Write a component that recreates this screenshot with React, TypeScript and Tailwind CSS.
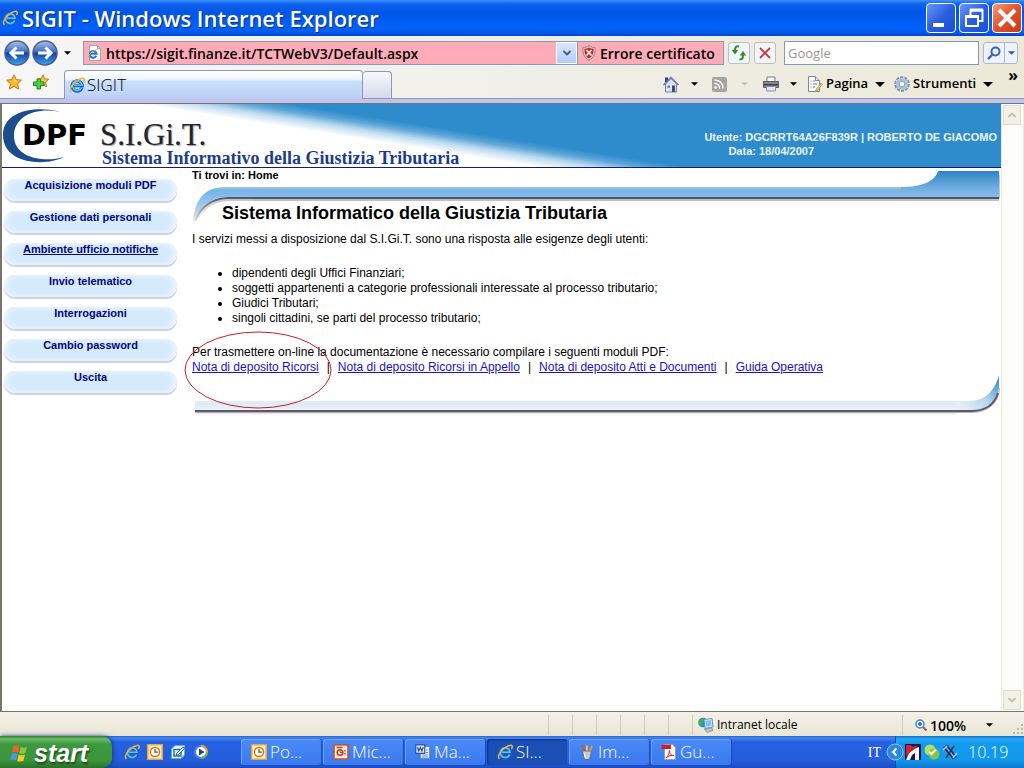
import type { ReactNode } from "react";
import { ChevronDown, ChevronUp, Rss } from "lucide-react";

const menuItems = [
  { label: "Acquisizione moduli PDF" },
  { label: "Gestione dati personali" },
  { label: "Ambiente ufficio notifiche", active: true },
  { label: "Invio telematico" },
  { label: "Interrogazioni" },
  { label: "Cambio password" },
  { label: "Uscita" },
];

const audiences = [
  "dipendenti degli Uffici Finanziari;",
  "soggetti appartenenti a categorie professionali interessate al processo tributario;",
  "Giudici Tributari;",
  "singoli cittadini, se parti del processo tributario;",
];

const forms = [
  "Nota di deposito Ricorsi",
  "Nota di deposito Ricorsi in Appello",
  "Nota di deposito Atti e Documenti",
  "Guida Operativa",
];

/* ---------- icons ---------- */

function IeIcon({ className = "size-4" }: { className?: string }) {
  return (
    <svg viewBox="0 0 16 16" className={className} fill="none" aria-hidden="true">
      <path d="M13 10.5A5 5 0 1 1 13.2 8.6H5" stroke="#1c62bd" strokeWidth="3.4" />
      <path d="M12.6 10.6A4.8 4.8 0 1 1 13 8.2H5" stroke="#5fc0f2" strokeWidth="1.600" />
      <path
        d="M2.6 14.8C-.2 13.6 2.6 8 6.6 4.8 10 2 14 .4 15 1.8c.6.9.2 2-.6 3.2"
        stroke="#e9b53a"
        strokeWidth="1.500"
      />
    </svg>
  );
}

function PageIeIcon() {
  return (
    <svg viewBox="0 0 16 16" className="size-4" fill="none" aria-hidden="true">
      <path d="M2.5.5h8l3 3v12h-11z" fill="#fff" stroke="#9fa8b5" />
      <path d="M10.500.5v3h3" stroke="#9fa8b5" />
      <path d="M9.300 10.800A3.400 3.400 0 1 1 9.600 8.800H3.500" stroke="#2277d0" strokeWidth="2" />
      <path d="M1.500 13C.500 11 5 5.500 10.500 4.500" stroke="#e9b53a" />
    </svg>
  );
}

function ArrowBall({ flip = false }: { flip?: boolean }) {
  const id = flip ? "ballNext" : "ballBack";
  return (
    <svg viewBox="0 0 26 26" className="size-[26px]" aria-hidden="true">
      <defs>
        <linearGradient id={id} x1="0" y1="0" x2="0" y2="1">
          <stop offset="0" stopColor="#a9c3ea" />
          <stop offset=".45" stopColor="#3f6fc0" />
          <stop offset=".5" stopColor="#12409c" />
          <stop offset="1" stopColor="#3fa6ee" />
        </linearGradient>
      </defs>
      <circle cx="13" cy="13" r="12" fill={`url(#${id})`} stroke="#4a5f8c" strokeWidth="1.500" />
      <path
        d={flip ? "M6 13h13M13.500 7.500l5.500 5.500-5.500 5.500" : "M20 13H7M12.500 7.500L7 13l5.500 5.500"}
        fill="none"
        stroke="#fff"
        strokeWidth="3"
      />
    </svg>
  );
}

function Caret({ className = "text-black" }: { className?: string }) {
  return (
    <svg viewBox="0 0 10 5" className={`h-[4px] w-[7px] ${className}`} aria-hidden="true">
      <path d="M0 0h10L5 5z" fill="currentColor" />
    </svg>
  );
}

function WideCaret() {
  return (
    <svg viewBox="0 0 10 5" className="h-[5px] w-[10px]" aria-hidden="true">
      <path d="M0 0h10L5 5z" fill="#000" />
    </svg>
  );
}

function StarIcon() {
  return (
    <svg viewBox="0 0 16 16" className="size-4" aria-hidden="true">
      <path
        d="M8 .8l2.200 4.800 5.200.6-3.800 3.600 1 5.200L8 12.400 3.400 15l1-5.200L.6 6.200l5.200-.6z"
        fill="#fbb725"
        stroke="#c27c18"
      />
      <path d="M8 3l1.300 3.500 3 .4L8 8z" fill="#ffe28a" />
    </svg>
  );
}

function AddStarIcon() {
  return (
    <svg viewBox="0 0 16 16" className="size-4" aria-hidden="true">
      <path
        d="M10 .8l1.700 4 4 .4-3 3 .8 4.600L10 10.600l-4 2 1-4.400-3-3 4-.4z"
        fill="#fbc246"
        stroke="#c27c18"
      />
      <path d="M4 5h3.500v3H11v3.500H7.500V15H4v-3.500H.5V8H4z" fill="#4fd048" stroke="#1b8a1f" />
    </svg>
  );
}

function ShieldIcon() {
  return (
    <svg viewBox="0 0 14 16" className="h-4 w-[14px]" aria-hidden="true">
      <path d="M7 .7c2 1.500 4 1.800 6 1.600.6 6-1 10.500-6 13C2 12.800.4 8.300 1 2.300c2 .2 4-.1 6-1.600z" fill="#d9d4cf" stroke="#8d8583" />
      <path d="M7 2.500c1.500 1 3 1.300 4.500 1.200.2 4.600-1 7.800-4.500 9.800-3.500-2-4.700-5.200-4.500-9.800C4 3.800 5.500 3.500 7 2.500z" fill="#cf1f26" />
      <path d="M4.500 5l5 5.500M9.500 5l-5 5.500" stroke="#fff" strokeWidth="1.700" />
    </svg>
  );
}

function RefreshIcon() {
  return (
    <svg viewBox="0 0 16 16" className="size-4" fill="none" aria-hidden="true">
      <path d="M8 1.500C5.500.5 4 2 4 5.500" stroke="#2f8c2c" strokeWidth="2" />
      <path d="M.8 5h6.400L4 9.500z" fill="#2f8c2c" />
      <path d="M8.500 14c2.500 1 3.500-.5 3.500-4" stroke="#2f8c2c" strokeWidth="2" />
      <path d="M8.800 10.500h6.400L12 6z" fill="#2f8c2c" />
    </svg>
  );
}

function StopIcon() {
  return (
    <svg viewBox="0 0 12 12" className="size-3" aria-hidden="true">
      <path d="M1 1l10 10M11 1L1 11" stroke="#c8363c" strokeWidth="1.800" />
    </svg>
  );
}

function SearchIcon() {
  return (
    <svg viewBox="0 0 14 14" className="size-[14px]" fill="none" aria-hidden="true">
      <circle cx="8.500" cy="5.500" r="4" stroke="#3563c4" strokeWidth="2" />
      <path d="M5.500 8.500L1 13" stroke="#3563c4" strokeWidth="2.400" />
    </svg>
  );
}

function HomeIcon() {
  return (
    <svg viewBox="0 0 16 17" className="h-[17px] w-4" aria-hidden="true">
      <path d="M2 1.500h3V6H2z" fill="#3a3f9c" />
      <path d="M2.500 8v8h11V8L8 2.500z" fill="#dbe4f3" stroke="#7384a8" />
      <path d="M.5 9L8 1.500 15.500 9" fill="none" stroke="#6479a8" strokeWidth="1.500" />
      <path d="M9 9.500h3V16H9z" fill="#344f7c" />
      <path d="M4.500 9.500h2.500V12H4.500z" fill="#7088b0" />
    </svg>
  );
}

function PrinterIcon() {
  return (
    <svg viewBox="0 0 16 16" className="size-4" aria-hidden="true">
      <path d="M4 1h8v5H4z" fill="#f7f9ff" stroke="#777f8c" />
      <path d="M.5 5.500h15v6H.5z" fill="#858a92" stroke="#595d66" />
      <path d="M1 8h14v1.500H1z" fill="#3e424a" />
      <path d="M3.500 10.500h9v4.500h-9z" fill="#dfe7fa" stroke="#8794ac" />
    </svg>
  );
}

function PageIcon() {
  return (
    <svg viewBox="0 0 16 16" className="size-4" aria-hidden="true">
      <path d="M1.500.5h7l4 4v11h-11z" fill="#fff" stroke="#7b8799" />
      <path d="M8.500.5v4h4" fill="#e4e9f1" stroke="#7b8799" />
      <path d="M3.500 5h1M6 5h2M3.500 8h1M6 8h4M3.500 11h1M6 11h2" stroke="#55749e" />
      <path d="M9 13.500l5-6.500 1.500 1.200-5 6.300-2 .8z" fill="#f3cd6c" stroke="#a98a44" strokeWidth=".7" />
    </svg>
  );
}

function GearIcon() {
  return (
    <svg viewBox="0 0 16 16" className="size-4" fill="none" aria-hidden="true">
      <circle cx="8" cy="8" r="6.600" stroke="#7f8fa5" strokeWidth="2.400" strokeDasharray="3 1.150" />
      <circle cx="8" cy="8" r="4.600" stroke="#a9c4de" strokeWidth="3.200" />
      <circle cx="8" cy="8" r="2.800" fill="#f7f9fb" stroke="#6f8cab" strokeWidth=".8" />
    </svg>
  );
}

function IntranetIcon() {
  return (
    <svg viewBox="0 0 16 16" className="size-4" aria-hidden="true">
      <circle cx="5" cy="5.500" r="4.800" fill="#2f86d8" />
      <path d="M1 4.500C2 2 5 .5 7 1.500L5 5 3 9C1.500 8 .8 6.500 1 4.500z" fill="#3fb24a" />
      <path d="M6 2.500l8-1 1 8.500-8 1.500z" fill="#d5ecfc" stroke="#6c8fb4" />
      <path d="M7.300 3.700l5.500-.7.700 5.800-5.500 1z" fill="#7cc2f6" />
      <path d="M6 12l8-1 1 2.500-6 2z" fill="#b9c1cd" stroke="#7d8796" strokeWidth=".7" />
    </svg>
  );
}

function ZoomIcon() {
  return (
    <svg viewBox="0 0 12 12" className="size-3" fill="none" aria-hidden="true">
      <circle cx="5" cy="5" r="4" fill="#dff0ff" stroke="#4c83c4" strokeWidth="1.500" />
      <path d="M8 8l3.500 3.500" stroke="#8a6a55" strokeWidth="2" />
      <path d="M3 5h4M5 3v4" stroke="#1d5fb8" strokeWidth="1.400" />
    </svg>
  );
}

function WindowsFlag() {
  return (
    <svg viewBox="0 0 20 18" className="h-[18px] w-5" aria-hidden="true">
      <path d="M3.500 2.500C5.500 1 7.500 1 9.500 2.200L8 8.500C6 7.300 4 7.500 2 8.600z" fill="#f0622d" />
      <path d="M10.700 2.800c2 1.100 4 1.200 6.300 0l-1.600 6.300c-2 1.200-4 1-6.200-.1z" fill="#8cc63c" />
      <path d="M1.600 9.900c2-1.100 4-1.100 6 .1L6 16.200c-2-1.200-4-1.200-6 0z" fill="#4f93ea" />
      <path d="M8.800 10.500c2.200 1.100 4.200 1.200 6.200 0l-1.600 6.300c-2 1.100-4 1.100-6.200-.1z" fill="#fcc92c" />
    </svg>
  );
}

function OutlookIcon() {
  return (
    <svg viewBox="0 0 16 16" className="size-4" fill="none" aria-hidden="true">
      <path d="M.8.8h14.400v14.400H.8z" fill="#fff3d2" stroke="#eba63c" strokeWidth="1.600" />
      <circle cx="8" cy="8" r="4.600" fill="#fff" stroke="#c97a1d" strokeWidth="1.500" />
      <path d="M8 5v3.200h2.800" stroke="#7b4511" strokeWidth="1.200" />
    </svg>
  );
}

function DesktopIcon() {
  return (
    <svg viewBox="0 0 16 16" className="size-4" fill="none" aria-hidden="true">
      <path d="M5 1.500h9.500V11L11 14.500H1.500V5z" fill="#f2fbff" stroke="#53aede" />
      <path d="M4 5.500h7v6.500H4z" fill="#e2f3fd" stroke="#2572af" strokeWidth="1.500" />
      <path d="M6.500 9.500L13 3l1.500 1.500L8 11H6.500z" fill="#fff" stroke="#1b5796" />
    </svg>
  );
}

function MediaIcon() {
  return (
    <svg viewBox="0 0 16 16" className="size-4" fill="none" aria-hidden="true">
      <circle cx="8" cy="8" r="6" fill="#fff" stroke="#4c83d8" strokeWidth="2" />
      <path d="M8 2a6 6 0 0 1 6 6" stroke="#f3a23b" strokeWidth="2" />
      <path d="M14 8a6 6 0 0 1-6 6" stroke="#68b946" strokeWidth="2" />
      <path d="M6 4.500l5.500 3.500L6 11.500z" fill="#22408c" />
    </svg>
  );
}

function PowerPointIcon() {
  return (
    <svg viewBox="0 0 16 16" className="size-4" fill="none" aria-hidden="true">
      <path d="M1 1h14v14H1z" fill="#fbe9df" stroke="#c2552d" strokeWidth="1.600" />
      <circle cx="7" cy="8.500" r="2.800" fill="#fff" stroke="#b3451f" strokeWidth="1.600" />
      <path d="M7 8.500V6M7 8.500h2.500" stroke="#b3451f" />
      <path d="M3.500 3.500h6M12 6v1.500M12 9v1.500" stroke="#b3451f" strokeWidth="1.400" />
    </svg>
  );
}

function WordIcon() {
  return (
    <svg viewBox="0 0 16 16" className="size-4" fill="none" aria-hidden="true">
      <path d="M5.500 2.500h9v12h-9z" fill="#fff" stroke="#6e8fc8" />
      <path d="M11 6h2M11 8.500h2M7 11h6M7 13h6" stroke="#5a7fc0" />
      <path d="M.8.8h9v8.500h-9z" fill="#e9f1ff" stroke="#244f9c" strokeWidth="1.200" />
      <path d="M2.500 3l1.200 4 1.600-3.500L6.900 7l1.300-4" stroke="#244f9c" strokeWidth="1.200" />
    </svg>
  );
}

function PaintIcon() {
  return (
    <svg viewBox="0 0 16 16" className="size-4" fill="none" aria-hidden="true">
      <path d="M6 9L3 1" stroke="#d8552b" strokeWidth="2" />
      <path d="M8 9V1.500" stroke="#f3c640" strokeWidth="2" />
      <path d="M10 9l3-7" stroke="#e39a3e" strokeWidth="2" />
      <path d="M3.500 7h9l-2 8.500h-5z" fill="#c5ccd2" stroke="#68727d" />
      <path d="M5 9l1.500 5" stroke="#fff" />
    </svg>
  );
}

function PdfIcon() {
  return (
    <svg viewBox="0 0 16 16" className="size-4" fill="none" aria-hidden="true">
      <path d="M3.500.5h8l3 3v12h-11z" fill="#fff" stroke="#9e9a9a" />
      <path d="M.5 1h9.500v4H.5z" fill="#d31f26" />
      <path d="M5 14c2-2 3.500-5 3.500-7.500 0 3.500 2 5.500 4.500 5-2.500-.6-5.500.2-8 2.500z" stroke="#d31f26" />
    </svg>
  );
}

/* ---------- window chrome ---------- */

function TitleBar() {
  return (
    <header className="flex h-9 shrink-0 items-center justify-between bg-[linear-gradient(180deg,#3b93fb_0px,#0e62ee_4px,#0055e5_12px,#0262fc_28px,#0259ea_33px,#0143cf_36px)] pr-[2px] pl-[2px]">
      <div className="flex items-center gap-1">
        <IeIcon />
        <h1 className="font-['Open_Sans',sans-serif] text-[22px] leading-7 font-semibold text-white [text-shadow:1px_1px_1px_#0b2f8a]">
          SIGIT - Windows Internet Explorer
        </h1>
      </div>
      <div className="flex gap-[3px]">
        <button aria-label="Riduci a icona" className="flex size-[30px] items-end rounded-[4px] border border-white bg-linear-to-br from-[#6f95f3] via-[#2a5ee0] to-[#1b4fd4] pb-[5px] pl-[6px]">
          <span className="h-1 w-[11px] bg-white" />
        </button>
        <button aria-label="Ripristina" className="flex size-[30px] items-center justify-center rounded-[4px] border border-white bg-linear-to-br from-[#6f95f3] via-[#2a5ee0] to-[#1b4fd4]">
          <svg viewBox="0 0 20 20" className="size-5" fill="none" stroke="#fff" aria-hidden="true">
            <path d="M6.500 7V2.500h12V13H15" strokeWidth="2" />
            <path d="M6 2h13" strokeWidth="3" />
            <path d="M2 8.500h12V18H2z" strokeWidth="2" />
            <path d="M1 8.500h14" strokeWidth="3" />
          </svg>
        </button>
        <button aria-label="Chiudi" className="flex size-[30px] items-center justify-center rounded-[4px] border border-white bg-linear-to-br from-[#f09a7c] via-[#e0502b] to-[#c83a14]">
          <svg viewBox="0 0 20 20" className="size-5" aria-hidden="true">
            <path d="M2 2l16 16M18 2L2 18" stroke="#fff" strokeWidth="4" />
          </svg>
        </button>
      </div>
    </header>
  );
}

function AddressBar() {
  return (
    <div className="flex h-[30px] items-center pt-1 pr-[6px] pl-1 text-[14px]">
      <div className="flex gap-[2px]">
        <button aria-label="Indietro">
          <ArrowBall />
        </button>
        <button aria-label="Avanti">
          <ArrowBall flip />
        </button>
      </div>
      <button aria-label="Pagine recenti" className="px-[6px]">
        <Caret />
      </button>
      <div className="ml-[6px] flex h-6 flex-1 items-center border border-[#7f9db9] bg-[#ffacb8] pl-[3px]">
        <PageIeIcon />
        <input
          aria-label="Indirizzo"
          defaultValue="https://sigit.finanze.it/TCTWebV3/Default.aspx"
          className="min-w-0 flex-1 bg-transparent pl-[3px] font-semibold outline-none"
        />
        <button aria-label="Mostra indirizzi" className="flex h-full w-[21px] items-center justify-center border border-white bg-linear-to-b from-[#dbe7fe] to-[#b5cbf8]">
          <ChevronDown className="size-3 text-[#4d6185]" strokeWidth={4} />
        </button>
      </div>
      <button className="flex h-6 w-[146px] items-center gap-1 border border-l-0 border-[#7f9db9] bg-[#ffacb8] pl-1 font-semibold whitespace-nowrap">
        <ShieldIcon />
        Errore certificato
      </button>
      <button aria-label="Aggiorna" className="ml-1 flex size-[22px] items-center justify-center rounded-[3px] border border-[#b4bfd0] bg-[#f3f5f6]">
        <RefreshIcon />
      </button>
      <button aria-label="Interrompi" className="ml-1 flex size-[22px] items-center justify-center rounded-[3px] border border-[#b4bfd0] bg-[#f3f5f6]">
        <StopIcon />
      </button>
      <input
        aria-label="Cerca"
        placeholder="Google"
        className="ml-2 h-6 w-[195px] border border-[#7f9db9] bg-white pl-[3px] text-[13px] outline-none placeholder:text-[#9c998c]"
      />
      <div className="ml-1 flex h-[22px] rounded-[3px] border border-[#a9b9d3] bg-[#eef3fa]">
        <button aria-label="Avvia ricerca" className="flex w-5 items-center justify-center">
          <SearchIcon />
        </button>
        <button aria-label="Opzioni ricerca" className="flex w-[13px] items-center justify-center border-l border-[#a9b9d3]">
          <Caret className="text-[#2759b4]" />
        </button>
      </div>
    </div>
  );
}

function TabRow() {
  return (
    <div className="flex h-[33px] items-end border-b border-[#8e97b5]">
      <div className="flex h-full w-16 items-center gap-[11px] pl-[6px]">
        <button aria-label="Preferiti">
          <StarIcon />
        </button>
        <button aria-label="Aggiungi a Preferiti">
          <AddStarIcon />
        </button>
      </div>
      <button className="-mb-px flex h-[29px] w-[299px] items-center gap-[2px] rounded-t-[4px] border border-b-0 border-[#8e97b5] bg-[linear-gradient(180deg,#ffffff_0%,#eef5fd_30%,#c9e0fa_36%,#bfd5f9_80%,#c0c9f4_100%)] pl-1 text-[17px] font-light">
        <IeIcon />
        SIGIT
      </button>
      <button aria-label="Nuova scheda" className="h-[27px] w-[29px] rounded-t-[4px] border border-b-0 border-l-0 border-[#8e97b5] bg-linear-to-b from-[#f8f8fc] to-[#d6d9ec]" />
      <div className="flex h-full flex-1 items-center justify-end pt-1 pr-[6px] text-[13px] font-semibold">
        <button aria-label="Pagina iniziale" className="mr-[12px]">
          <HomeIcon />
        </button>
        <Caret />
        <button aria-label="Feed" className="mr-[14px] ml-[14px] flex size-[15px] items-center justify-center rounded-[2px] bg-[#a6a49f] text-white">
          <Rss className="size-3" strokeWidth={3} />
        </button>
        <Caret className="text-[#c9c6b6]" />
        <button aria-label="Stampa" className="mr-[11px] ml-[15px]">
          <PrinterIcon />
        </button>
        <Caret />
        <button className="ml-[10px] flex items-center gap-[3px]">
          <PageIcon />
          Pagina
          <span className="w-px" />
          <WideCaret />
        </button>
        <button className="ml-[9px] flex items-center gap-[3px]">
          <GearIcon />
          Strumenti
          <span className="w-px" />
          <WideCaret />
        </button>
        <button aria-label="Altri comandi" className="ml-[15px] self-start text-[16px] leading-[10px] font-bold">
          »
        </button>
      </div>
    </div>
  );
}

/* ---------- web page ---------- */

function Banner() {
  return (
    <header className="flex h-16 shrink-0 justify-between border-b border-[#1b1a72] bg-[#2f8ccc]">
      <div className="flex h-full w-[678px] bg-[linear-gradient(9deg,#fff_84px,#bcdaf0_93px,#5fa7d8_100px,#2f8ccc_107px)]">
        <div className="relative w-[98px]">
          <svg viewBox="0 0 70 54" className="absolute top-[5px] left-0 h-[54px] w-[70px]" aria-hidden="true">
            <path
              d="M58 3C40-3 1-1 1 26c0 29 42 32 61 22-20 6-50 1-50-21C12 6 36-2 58 3z"
              fill="#1b4c8c"
            />
          </svg>
          <span className="absolute top-[14px] left-[20px] font-['DejaVu_Sans',sans-serif] text-[29px] leading-[34px] font-bold text-black">
            DPF
          </span>
        </div>
        <div className="flex flex-col pt-4 font-['Liberation_Serif',serif]">
          <span className="text-[31px] leading-[30px] text-[#23232f] [text-shadow:1px_1px_1px_#9a9aa6]">S.I.Gi.T.</span>
          <span className="pl-[2px] text-[18px] leading-[16px] font-bold whitespace-nowrap text-[#1d3b8b]">
            Sistema Informativo della Giustizia Tributaria
          </span>
        </div>
      </div>
      <div className="pt-[26px] pr-1 text-[11px] leading-[14px] font-bold whitespace-nowrap text-[#e8f5ff]">
        <p>Utente: DGCRRT64A26F839R | ROBERTO DE GIACOMO</p>
        <p className="pl-6">Data: 18/04/2007</p>
      </div>
    </header>
  );
}

function SideMenu() {
  return (
    <nav className="flex w-[176px] flex-col gap-[10px] pt-[11px] pr-px pl-[2px]">
      {menuItems.map((item) => (
        <a
          key={item.label}
          href="#"
          className={`block h-[22px] rounded-[11px] bg-[#d4eafd] text-center text-[11px] leading-[13px] font-bold whitespace-nowrap text-[#05057e] shadow-[0_2px_1px_#cfd1d4,inset_4px_0_5px_#eaf4fd,inset_-4px_0_5px_#eaf4fd] ${
            item.active ? "underline" : ""
          }`}
        >
          {item.label}
        </a>
      ))}
    </nav>
  );
}

/* Blue ribbon that opens the content box, with the raised tab on the right */
function TopRibbon() {
  return (
    <div className="pointer-events-none absolute inset-x-0 top-[3px] flex" aria-hidden="true">
      <svg viewBox="0 0 60 56" className="h-14 w-[60px]">
        <defs>
          <linearGradient id="ribbonLeft" x1="0" y1="16" x2="0" y2="54" gradientUnits="userSpaceOnUse">
            <stop offset="0" stopColor="#a5cbe0" />
            <stop offset=".08" stopColor="#78b4e4" />
            <stop offset=".26" stopColor="#84bcf0" />
            <stop offset=".6" stopColor="#b4cfe4" />
            <stop offset="1" stopColor="#f4f7fa" />
          </linearGradient>
          <linearGradient id="ribbonEdge" x1="0" y1="26" x2="0" y2="52" gradientUnits="userSpaceOnUse">
            <stop offset="0" stopColor="#4d5564" />
            <stop offset="1" stopColor="#e6e6e6" />
          </linearGradient>
          <linearGradient id="ribbonShade" x1="0" y1="27" x2="0" y2="50" gradientUnits="userSpaceOnUse">
            <stop offset="0" stopColor="#c3c0c4" />
            <stop offset="1" stopColor="#ffffff" />
          </linearGradient>
        </defs>
        <path d="M60 29H36Q13 30 4 52" fill="none" stroke="url(#ribbonShade)" strokeWidth="2" />
        <path d="M1 52C2 30 12 16 32 16h28v10H36C18 26 8 36 1 52z" fill="url(#ribbonLeft)" />
        <path d="M60 27H36Q12 28 3 50" fill="none" stroke="url(#ribbonEdge)" strokeWidth="2" />
      </svg>
      <div className="mt-4 h-[14px] flex-1 bg-[linear-gradient(180deg,#a5cbe0_0px,#78b4e4_3px,#84bcf0_10px,#4d5564_10px,#4d5564_12px,#c3c0c4_12px,#c3c0c4_14px)]" />
      <svg viewBox="0 0 100 31" className="h-[31px] w-[100px]">
        <defs>
          <linearGradient id="ribbonRight" x1="0" y1="0" x2="0" y2="26" gradientUnits="userSpaceOnUse">
            <stop offset="0" stopColor="#2c83c5" />
            <stop offset=".7" stopColor="#74b1e2" />
            <stop offset="1" stopColor="#84bcf0" />
          </linearGradient>
        </defs>
        <path d="M98 4v24" stroke="#b9c6d4" strokeWidth="2" />
        <path d="M0 29h98" stroke="#c3c0c4" strokeWidth="2" />
        <path d="M0 16c22 0 34-6 37-16h61v26H0z" fill="url(#ribbonRight)" />
        <path d="M0 27h98" stroke="#4d5564" strokeWidth="2" />
      </svg>
    </div>
  );
}

function BottomRibbon() {
  return (
    <div className="flex items-end pl-[3px]" aria-hidden="true">
      <div className="h-[14px] flex-1 bg-[linear-gradient(180deg,#e3eef7_0px,#dcebf6_3px,#ebf3fb_9px,#5b5c68_9px,#5b5c68_11px,#b5b2b8_11px,#b5b2b8_12px,#e2e1e4_12px,#ffffff_14px)]" />
      <svg viewBox="0 0 45 40" className="h-10 w-[45px]">
        <defs>
          <linearGradient id="ribbonTail" x1="43" y1="0" x2="10" y2="35" gradientUnits="userSpaceOnUse">
            <stop offset="0" stopColor="#2f86c6" />
            <stop offset=".55" stopColor="#b3d5ee" />
            <stop offset="1" stopColor="#e3eef7" />
          </linearGradient>
        </defs>
        <path d="M0 37.500h15C33 37.500 43 27 43.500 13" fill="none" stroke="#b5b2b8" />
        <path d="M0 26h12C32 26 38 14 43 1v9C43 26 32 35 15 35H0z" fill="url(#ribbonTail)" />
        <path d="M0 36h15C31 36 39 28 42 18" fill="none" stroke="#5b5c68" strokeWidth="2" />
      </svg>
    </div>
  );
}

function PageBody() {
  return (
    <main className="flex-1 pl-[14px] text-[12px] leading-[15px]">
      <div className="relative">
        <TopRibbon />
        <p className="relative text-[11px] font-bold">Ti trovi in: Home</p>
        <h2 className="relative pt-5 pl-[30px] text-[18px] leading-5 font-bold">
          Sistema Informatico della Giustizia Tributaria
        </h2>
        <p className="relative pt-[9px]">I servizi messi a disposizione dal S.I.Gi.T. sono una risposta alle esigenze degli utenti:</p>
        <ul className="mt-[19px] list-disc pl-10">
          {audiences.map((text) => (
            <li key={text}>{text}</li>
          ))}
        </ul>
        <div className="relative mt-[19px]">
          <svg viewBox="0 0 148 78" className="absolute -top-[14px] -left-2 h-[78px] w-[148px]" fill="none" aria-hidden="true">
            <ellipse cx="74" cy="39" rx="73" ry="38" stroke="#d01c1c" />
          </svg>
          <p>Per trasmettere on-line la documentazione è necessario compilare i seguenti moduli PDF:</p>
          <p className="relative flex gap-2">
            {forms.map((label, i) => (
              <span key={label} className="flex gap-2">
                {i > 0 && <span>|</span>}
                <a href="#" className="text-[#1a12c8] underline">
                  {label}
                </a>
              </span>
            ))}
          </p>
        </div>
        <BottomRibbon />
      </div>
    </main>
  );
}

function ScrollBar() {
  return (
    <div className="flex w-[23px] shrink-0 flex-col justify-between border-x border-[#eceade] bg-[#fdfdf9] p-px pr-0">
      <button aria-label="Scorri su" className="mr-[2px] flex h-5 items-center justify-center border border-[#dddccd] bg-[#f2f1e8] text-[#c3c1b1]">
        <ChevronUp className="size-3" strokeWidth={4} />
      </button>
      <button aria-label="Scorri giù" className="mr-[2px] flex h-5 items-center justify-center border border-[#dddccd] bg-[#f2f1e8] text-[#c3c1b1]">
        <ChevronDown className="size-3" strokeWidth={4} />
      </button>
    </div>
  );
}

/* ---------- status bar and taskbar ---------- */

function StatusBar() {
  return (
    <footer className="flex h-6 shrink-0 items-stretch bg-linear-to-b from-[#f4f2e8] to-[#e9e6d6] pt-[3px] pb-[1px] text-[12px]">
      <div className="flex-1" />
      {[0, 1, 2, 3, 4, 5].map((n) => (
        <div key={n} className="w-6 border-l border-[#cfccbb]" />
      ))}
      <div className="flex w-[210px] items-center gap-[3px] border-l border-[#cfccbb] pl-[5px]">
        <IntranetIcon />
        Intranet locale
      </div>
      <button className="flex w-[122px] items-center gap-[3px] border-l border-[#cfccbb] pl-3 text-[14px] font-semibold">
        <ZoomIcon />
        100%
        <span className="flex-1" />
        <Caret />
        <svg viewBox="0 0 12 12" className="ml-4 size-3 self-end" fill="#bab7a6" aria-hidden="true">
          <path d="M9 1h2v2H9zM5 5h2v2H5zM9 5h2v2H9zM1 9h2v2H1zM5 9h2v2H5zM9 9h2v2H9z" />
        </svg>
      </button>
    </footer>
  );
}

function TaskButton({ icon, label, active = false }: { icon: ReactNode; label: string; active?: boolean }) {
  return (
    <button
      className={`flex h-[26px] w-20 items-center gap-[3px] rounded-[3px] pl-[10px] text-[17px] font-light text-white ${
        active
          ? "bg-[#1c4fb6] shadow-[inset_1px_1px_2px_#0f3486]"
          : "bg-linear-to-b from-[#4a8bf8] to-[#3a78ef] shadow-[inset_1px_1px_0_#6ba3ff,1px_0_1px_#1d4cb8]"
      }`}
    >
      {icon}
      {label}
    </button>
  );
}

function Taskbar() {
  return (
    <footer className="flex h-8 shrink-0 items-center bg-[linear-gradient(180deg,#2f62c8_0px,#3f86f4_2px,#2760e2_6px,#245edb_24px,#1b4bc0_32px)]">
      <button className="flex h-full w-28 items-center gap-1 rounded-r-[10px] bg-[linear-gradient(180deg,#2f7a33_0px,#6fbf67_3px,#3d973e_8px,#3a973a_24px,#2a7029_32px)] pt-[2px] pl-[10px] font-['Liberation_Sans',Arial,sans-serif] text-[25px] leading-7 font-bold text-white italic shadow-[1px_0_4px_#173c8f] [text-shadow:1px_2px_2px_#1e4a1c]">
        <WindowsFlag />
        start
      </button>
      <div className="ml-3 flex gap-[7px]">
        <button aria-label="Internet Explorer">
          <IeIcon />
        </button>
        <button aria-label="Outlook">
          <OutlookIcon />
        </button>
        <button aria-label="Mostra desktop">
          <DesktopIcon />
        </button>
        <button aria-label="Media Player">
          <MediaIcon />
        </button>
      </div>
      <div className="ml-[32px] flex flex-1 gap-[2px]">
        <TaskButton icon={<OutlookIcon />} label="Po..." />
        <TaskButton icon={<PowerPointIcon />} label="Mic..." />
        <TaskButton icon={<WordIcon />} label="Ma..." />
        <TaskButton icon={<IeIcon />} label="SI..." active />
        <TaskButton icon={<PaintIcon />} label="Im..." />
        <TaskButton icon={<PdfIcon />} label="Gu..." />
      </div>
      <span className="pr-[14px] font-['Liberation_Serif',serif] text-[14px] text-white">IT</span>
      <div className="flex h-full w-[129px] items-center border-l border-[#0b4ea8] bg-[linear-gradient(180deg,#0d72c8_0px,#2ba6f8_3px,#129bee_8px,#119aec_24px,#0f77cf_32px)] text-white">
        <button aria-label="Mostra icone nascoste" className="-ml-[10px]">
          <svg viewBox="0 0 18 18" className="size-[18px]" fill="none" aria-hidden="true">
            <circle cx="9" cy="9" r="8" fill="#2c85ea" stroke="#8cc8f8" />
            <path d="M10.500 5.500L7 9l3.500 3.500" stroke="#fff" strokeWidth="2" />
          </svg>
        </button>
        <svg viewBox="0 0 16 16" className="ml-px size-4" aria-hidden="true">
          <path d="M0 0h16v16H0z" fill="#14144f" />
          <path d="M1 16l3-7 7-5 3-1v13h-4V9l-3 2-2 5z" fill="#fff" />
          <path d="M1 1h4l3 2 4-2v2L5 8l-4 5z" fill="#d8232e" />
        </svg>
        <svg viewBox="0 0 16 16" className="ml-[3px] size-4" fill="none" aria-hidden="true">
          <circle cx="6" cy="6" r="5.500" fill="#b5df5c" />
          <circle cx="10" cy="10" r="5.500" fill="#86c440" />
          <path d="M5 7.500L7.500 10 12 5.500" stroke="#fff" strokeWidth="2" />
        </svg>
        <svg viewBox="0 0 16 16" className="ml-[2px] size-4" fill="none" aria-hidden="true">
          <path d="M3 2l10 12" stroke="#1c2f72" strokeWidth="5" />
          <path d="M4 3l8 10" stroke="#8ba7dc" strokeWidth="1.500" />
          <path d="M12 2L4 14" stroke="#33343c" strokeWidth="1.500" />
          <path d="M1 6l4-4M11 14l4-5" stroke="#c7ccd6" strokeWidth="1.500" />
        </svg>
        <time className="ml-[10px] text-[16px] font-light">10.19</time>
      </div>
    </footer>
  );
}

export default function App() {
  return (
    <div className="flex h-screen flex-col overflow-hidden bg-white font-['Open_Sans','Noto_Sans',sans-serif] text-black">
      <TitleBar />
      <div className="shrink-0 bg-linear-to-r from-[#f6f6f8] via-[#f0efe8] to-[#ece9d8]">
        <AddressBar />
        <TabRow />
      </div>
      <div className="h-1 shrink-0 bg-[#c0c5ee]" />
      <div className="flex min-h-0 flex-1 border-t border-b border-l-2 border-[#77766c] font-['Liberation_Sans',Arial,sans-serif]">
        <div className="flex min-w-0 flex-1 flex-col">
          <Banner />
          <div className="flex">
            <SideMenu />
            <PageBody />
          </div>
        </div>
        <ScrollBar />
      </div>
      <StatusBar />
      <Taskbar />
    </div>
  );
}
